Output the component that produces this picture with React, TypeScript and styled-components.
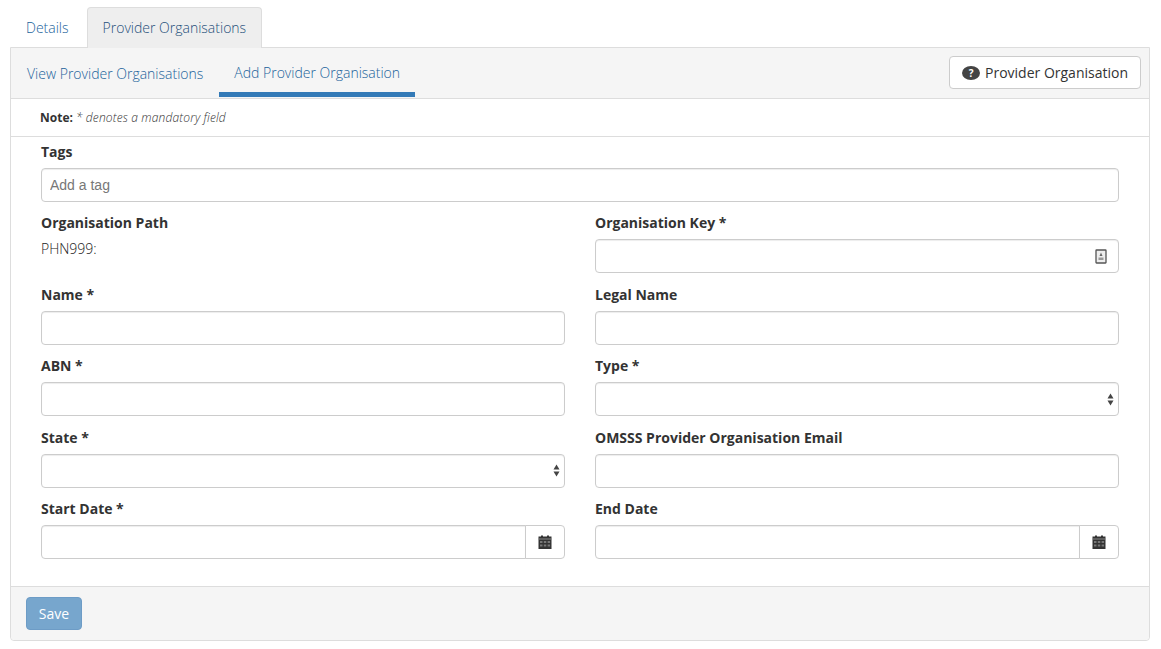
import styled, { createGlobalStyle } from "styled-components";

const GlobalStyle = createGlobalStyle`
  html, body {
    margin: 0;
    padding: 0;
    background: #fff;
    font-family: "Open Sans", sans-serif;
    font-size: 14px;
    line-height: 20px;
    color: #333;
  }
  * {
    box-sizing: border-box;
  }
`;

const Page = styled.div`
  padding: 7px 11px 0 10px;
  width: 1161px;
  height: 649px;
  overflow: hidden;
`;

const Tabs = styled.div`
  display: flex;
  height: 40px;
  padding-left: 1px;
`;

const Tab = styled.a<{ $active?: boolean }>`
  display: flex;
  align-items: center;
  padding: 0 ${(p) => (p.$active ? "15px 0 15px" : "15px 0 14px")};
  margin-right: 2px;
  height: 41px;
  font-weight: 300;
  color: ${(p) => (p.$active ? "#1f4f7a" : "#22639b")};
  background: ${(p) => (p.$active ? "#eee" : "transparent")};
  border: 1px solid ${(p) => (p.$active ? "#ddd" : "transparent")};
  border-bottom: 0;
  border-radius: 4px 4px 0 0;
  position: relative;
  z-index: 1;
`;

const Panel = styled.div`
  border: 1px solid #ddd;
  border-radius: 0 0 4px 4px;
  width: 1140px;
  height: 594px;
  display: flex;
  flex-direction: column;
`;

const SubNav = styled.div`
  display: flex;
  justify-content: space-between;
  height: 51px;
  flex: none;
  background: #f5f5f5;
  border-bottom: 1px solid #ddd;
  padding: 0 8px 0 1px;
`;

const SubTabs = styled.div`
  display: flex;
  gap: 1px;
`;

const SubTab = styled.a<{ $active?: boolean }>`
  display: flex;
  align-items: center;
  padding: 0 15px;
  height: 49px;
  font-weight: 300;
  color: #22639b;
  border-bottom: ${(p) => (p.$active ? "5px solid #337ab7" : "0")};
  padding-top: ${(p) => (p.$active ? "6px" : "2px")};
`;

const HelpButton = styled.button`
  display: flex;
  align-items: center;
  gap: 5px;
  height: 33px;
  margin-top: 8px;
  padding: 0 12px;
  background: #fff;
  border: 1px solid #ccc;
  border-radius: 4px;
  font: inherit;
  color: #333;
`;

const HelpBadge = styled.span`
  width: 18px;
  height: 14px;
  margin-top: 1px;
  border-radius: 50%;
  background: #444;
  color: #fff;
  font-size: 10px;
  font-weight: 700;
  line-height: 14px;
  text-align: center;
`;

const NoteRow = styled.div`
  flex: none;
  height: 38px;
  border-bottom: 1px solid #ddd;
  padding: 0 29px;
  display: flex;
  align-items: center;
  gap: 3px;
  font-size: 12px;
  b {
    font-weight: 700;
  }
  i {
    font-style: italic;
    font-weight: 300;
    letter-spacing: 0.15px;
  }
`;

const FormBody = styled.div`
  flex: 1;
  padding: 5px 30px 0;
`;

const FormGrid = styled.div`
  display: grid;
  grid-template-columns: 524px 524px;
  column-gap: 30px;
  row-gap: 11.43px;
`;

const Field = styled.div<{ $wide?: boolean }>`
  ${(p) => (p.$wide ? "grid-column: 1 / span 2;" : "")}
`;

const Label = styled.label`
  display: block;
  font-weight: 700;
  margin-bottom: 6px;
`;

const StaticValue = styled.div`
  font-weight: 300;
  color: #222;
`;

const Input = styled.input`
  display: block;
  width: 100%;
  height: 34px;
  padding: 6px 8px;
  border: 1px solid #ccc;
  border-radius: 4px;
  box-shadow: inset 0 1px 1px rgba(0, 0, 0, 0.075);
  font-family: "Liberation Sans", Arial, sans-serif;
  font-size: 14px;
  color: #555;
  background: #fff;
  &::placeholder {
    color: #777;
    opacity: 1;
  }
`;

const InputBox = styled.div`
  position: relative;
`;

const InputIcon = styled.svg`
  position: absolute;
  top: 10px;
  right: 12px;
  width: 12px;
  height: 15px;
`;

const SelectBox = styled.div`
  height: 34px;
  border: 1px solid #ccc;
  border-radius: 4px;
  box-shadow: inset 0 1px 1px rgba(0, 0, 0, 0.075);
  background: #fff;
  display: flex;
  align-items: center;
  justify-content: flex-end;
  padding-right: 4px;
`;

const DateGroup = styled.div`
  display: flex;
  height: 34px;
`;

const DateInput = styled(Input)`
  flex: 1;
  border-radius: 4px 0 0 4px;
`;

const DateButton = styled.button`
  flex: none;
  width: 40px;
  margin-left: -1px;
  border: 1px solid #ccc;
  border-radius: 0 4px 4px 0;
  background: #fff;
  display: flex;
  align-items: center;
  justify-content: center;
  padding: 0;
`;

const Footer = styled.div`
  flex: none;
  height: 54px;
  background: #f5f5f5;
  border-top: 1px solid #ddd;
  border-radius: 0 0 4px 4px;
  padding: 10px 15px;
`;

const SaveButton = styled.button`
  height: 33px;
  width: 56px;
  padding: 0;
  background: #77a6cd;
  border: 1px solid #6d9cc6;
  border-radius: 4px;
  color: #fff;
  font: inherit;
`;

const Calendar = () => (
  <svg width="14" height="14" viewBox="0 0 14 14">
    <rect x="0.5" y="1.5" width="13" height="12.5" fill="#333" />
    <rect x="3" y="0.5" width="2" height="2.5" fill="#333" />
    <rect x="9" y="0.5" width="2" height="2.5" fill="#333" />
    <rect x="0.5" y="3.5" width="13" height="1" fill="#888" />
    <g fill="#777">
      <rect x="2" y="6" width="2.5" height="2" />
      <rect x="5.8" y="6" width="2.5" height="2" />
      <rect x="9.6" y="6" width="2.5" height="2" />
      <rect x="2" y="9.5" width="2.5" height="2" />
      <rect x="5.8" y="9.5" width="2.5" height="2" />
      <rect x="9.6" y="9.5" width="2.5" height="2" />
    </g>
  </svg>
);

const SelectArrows = () => (
  <svg width="7" height="13" viewBox="0 0 7 13">
    <path d="M3.5 0.5 L6.5 5.5 H0.5 Z" fill="#444" />
    <path d="M3.5 12.5 L6.5 7.5 H0.5 Z" fill="#444" />
  </svg>
);

const App = () => {
  return (
    <Page>
      <GlobalStyle />
      <Tabs>
        <Tab>Details</Tab>
        <Tab $active>Provider Organisations</Tab>
      </Tabs>
      <Panel>
        <SubNav>
          <SubTabs>
            <SubTab>View Provider Organisations</SubTab>
            <SubTab $active>Add Provider Organisation</SubTab>
          </SubTabs>
          <HelpButton>
            <HelpBadge>?</HelpBadge>
            Provider Organisation
          </HelpButton>
        </SubNav>
        <NoteRow>
          <b>Note:</b>
          <i>* denotes a mandatory field</i>
        </NoteRow>
        <FormBody>
          <FormGrid>
            <Field $wide>
              <Label>Tags</Label>
              <Input placeholder="Add a tag" />
            </Field>
            <Field>
              <Label>Organisation Path</Label>
              <StaticValue>PHN999:</StaticValue>
            </Field>
            <Field>
              <Label>Organisation Key *</Label>
              <InputBox>
                <Input />
                <InputIcon viewBox="0 0 12 15">
                  <rect x="1" y="1" width="10" height="13" fill="#eee" stroke="#555" strokeWidth="1.3" rx="0.5" />
                  <path d="M6 3.5 L7.5 7 H4.5 Z" fill="#666" />
                  <rect x="3.5" y="8.5" width="5" height="2.5" fill="#999" />
                </InputIcon>
              </InputBox>
            </Field>
            <Field>
              <Label>Name *</Label>
              <Input />
            </Field>
            <Field>
              <Label>Legal Name</Label>
              <Input />
            </Field>
            <Field>
              <Label>ABN *</Label>
              <Input />
            </Field>
            <Field>
              <Label>Type *</Label>
              <SelectBox>
                <SelectArrows />
              </SelectBox>
            </Field>
            <Field>
              <Label>State *</Label>
              <SelectBox>
                <SelectArrows />
              </SelectBox>
            </Field>
            <Field>
              <Label>OMSSS Provider Organisation Email</Label>
              <Input />
            </Field>
            <Field>
              <Label>Start Date *</Label>
              <DateGroup>
                <DateInput />
                <DateButton>
                  <Calendar />
                </DateButton>
              </DateGroup>
            </Field>
            <Field>
              <Label>End Date</Label>
              <DateGroup>
                <DateInput />
                <DateButton>
                  <Calendar />
                </DateButton>
              </DateGroup>
            </Field>
          </FormGrid>
        </FormBody>
        <Footer>
          <SaveButton>Save</SaveButton>
        </Footer>
      </Panel>
    </Page>
  );
};

export default App;
